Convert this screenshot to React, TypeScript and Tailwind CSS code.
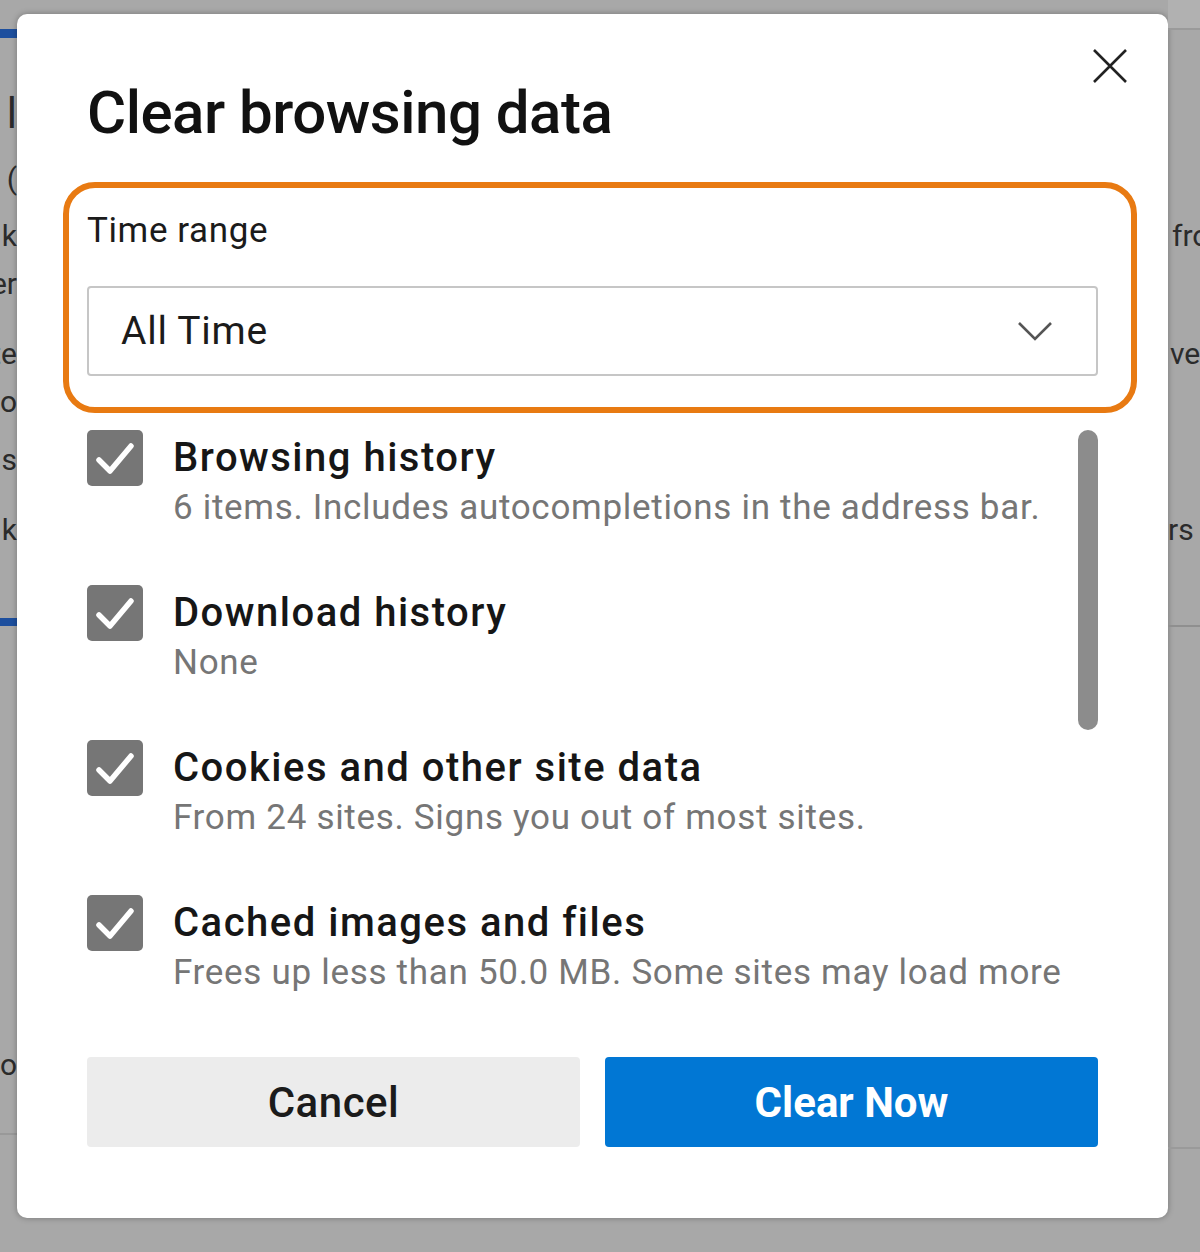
type Item = {
  title: string;
  detail: string;
};

const items: Item[] = [
  { title: "Browsing history", detail: "6 items. Includes autocompletions in the address bar." },
  { title: "Download history", detail: "None" },
  { title: "Cookies and other site data", detail: "From 24 sites. Signs you out of most sites." },
  { title: "Cached images and files", detail: "Frees up less than 50.0 MB. Some sites may load more" },
];

function Fragment({ text, top, height, size, end }: { text: string; top: number; height: number; size: string; end?: boolean }) {
  return (
    <div
      className={`flex whitespace-nowrap text-[#2b2b2b] ${end ? "justify-end" : "justify-start"} ${size}`}
      style={{ marginTop: top, height, lineHeight: `${height}px` }}
    >
      {text}
    </div>
  );
}

function Checkbox() {
  return (
    <div className="flex h-[56px] w-[56px] shrink-0 items-center justify-center rounded-[5px] bg-[#767676]">
      <svg width="56" height="56" viewBox="0 0 56 56" fill="none">
        <path d="M12 30 L23 41 L44 16" stroke="white" strokeWidth="5.5" strokeLinecap="round" strokeLinejoin="round" />
      </svg>
    </div>
  );
}

export default function App() {
  return (
    <div className="flex h-[1252px] w-[1200px] overflow-hidden bg-[#a8a8a8] font-['Roboto','Noto_Sans',sans-serif]">
      {/* page behind, left edge */}
      <div className="flex w-[17px] shrink-0 flex-col overflow-hidden">
        <div className="mt-[29px] h-[9px] bg-[#1d4f9e]" />
        <Fragment text="l" top={55} height={42} size="text-[42px]" end />
        <Fragment text="(" top={28} height={32} size="text-[30px]" end />
        <Fragment text="k" top={27} height={28} size="text-[30px]" end />
        <Fragment text="er" top={20} height={28} size="text-[30px]" end />
        <Fragment text="te" top={42} height={28} size="text-[30px]" end />
        <Fragment text="o" top={20} height={28} size="text-[30px]" end />
        <Fragment text="s" top={30} height={28} size="text-[30px]" end />
        <Fragment text="k" top={42} height={28} size="text-[30px]" end />
        <div className="mt-[74px] h-[8px] bg-[#1d4f9e]" />
        <Fragment text="o" top={424} height={30} size="text-[30px]" end />
        <div className="mt-[53px] h-[2px] bg-[#999999]" />
      </div>

      {/* dialog */}
      <div className="w-[1151px] shrink-0 pt-[14px]">
        <div className="flex h-[1204px] flex-col rounded-[10px] bg-white px-[70px] pt-[34px] pb-[71px] shadow-[0_0_6px_rgba(0,0,0,0.3)]">
          <div className="flex items-start justify-between">
            <h1 className="mt-[35px] text-[60px] leading-[60px] font-medium tracking-[-0.5px] text-[#111111]">
              Clear browsing data
            </h1>
            <button className="-mr-[30px] flex h-[36px] w-[36px] items-center justify-center">
              <svg width="36" height="36" viewBox="0 0 36 36" fill="none">
                <path d="M2 2 L34 34 M34 2 L2 34" stroke="#222" strokeWidth="2.6" />
              </svg>
            </button>
          </div>

          <div className="mt-[39px] -mr-[39px] -ml-[24px] rounded-[32px] border-[6px] border-[#e87a12] pt-[23px] pr-[33px] pb-[31px] pl-[18px]">
            <div className="text-[35px] leading-[40px] tracking-[0.6px] text-[#1b1b1b]">Time range</div>
            <div className="mt-[35px] flex h-[90px] items-center justify-between rounded-[4px] border-2 border-[#c6c6c6] pr-[43px] pl-[32px]">
              <span className="text-[39px] leading-[40px] tracking-[0.75px] text-[#1b1b1b]">All Time</span>
              <svg width="36" height="22" viewBox="0 0 36 22" fill="none">
                <path d="M2 3 L18 19 L34 3" stroke="#555" strokeWidth="2.6" />
              </svg>
            </div>
          </div>

          <div className="mt-[17px] flex h-[600px] gap-[20px] overflow-hidden">
            <div className="flex min-w-0 flex-1 flex-col">
              {items.map((item) => (
                <div key={item.title} className="flex h-[155px] shrink-0 gap-[30px]">
                  <Checkbox />
                  <div className="min-w-0">
                    <div className="mt-[6px] text-[40px] leading-[44px] font-medium tracking-[1.5px] whitespace-nowrap text-[#161616]">
                      {item.title}
                    </div>
                    <div className="mt-[8px] text-[35px] leading-[40px] tracking-[0.7px] whitespace-nowrap text-[#767676]">
                      {item.detail}
                    </div>
                  </div>
                </div>
              ))}
            </div>
            <div className="w-[20px] shrink-0">
              <div className="h-[300px] rounded-full bg-[#8c8c8c]" />
            </div>
          </div>

          <div className="mt-auto flex gap-[25px]">
            <button className="flex h-[90px] flex-1 items-center justify-center rounded-[4px] bg-[#ececec] text-[42px] font-medium tracking-[0.5px] text-[#1b1b1b]">
              Cancel
            </button>
            <button className="flex h-[90px] flex-1 items-center justify-center rounded-[4px] bg-[#0177d4] text-[42px] font-bold text-white">
              Clear Now
            </button>
          </div>
        </div>
      </div>

      {/* page behind, right edge */}
      <div className="flex w-[32px] shrink-0 flex-col overflow-hidden">
        <div className="h-[28px] bg-[#b1b1b1]" />
        <div className="h-[2px] bg-[#9a9a9a]" />
        <Fragment text="fro" top={192} height={28} size="text-[30px] pl-[4px]" />
        <Fragment text="ver" top={90} height={28} size="text-[30px] pl-[2px]" />
        <Fragment text="rs" top={148} height={28} size="text-[30px]" />
        <div className="mt-[81px] h-[2px] bg-[#8f8f8f]" />
        <div className="mt-[520px] h-[2px] bg-[#9a9a9a]" />
      </div>
    </div>
  );
}
